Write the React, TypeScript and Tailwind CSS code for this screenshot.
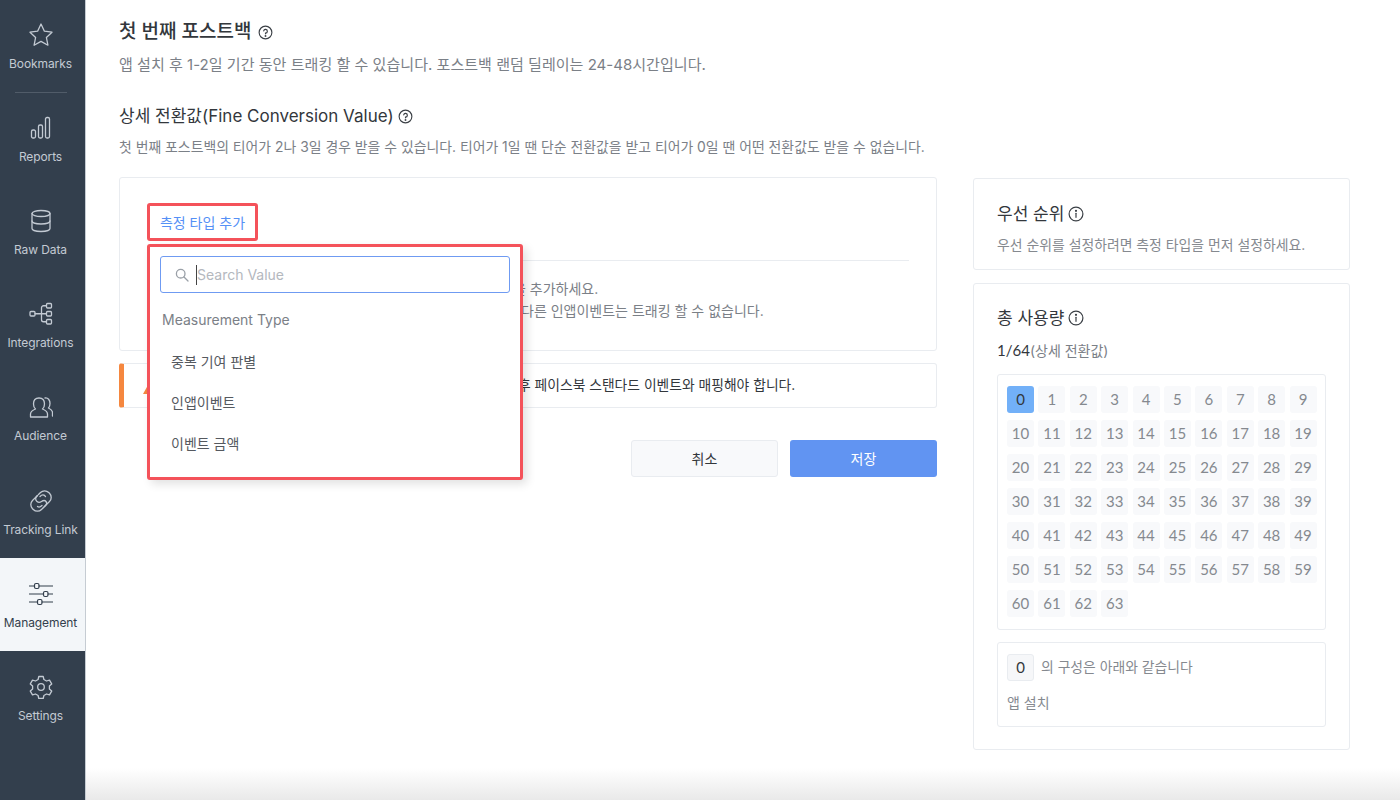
import React from "react";

const FONT = "font-['Inter','Noto_Sans_CJK_KR',sans-serif]";

const s = { fill: "none", stroke: "currentColor", strokeWidth: 1.3, strokeLinecap: "round" as const, strokeLinejoin: "round" as const };

const icons: Record<string, React.ReactNode> = {
  Bookmarks: <path {...s} d="M12 1l3.400 7.200 7.600 1-5.600 5.300 1.500 7.700L12 18.400l-6.900 3.800 1.500-7.700L1 9.200l7.600-1z" />,
  Reports: (
    <g {...s}>
      <rect x="2.500" y="14" width="4" height="8" rx="1.500" />
      <rect x="9.500" y="9" width="4" height="13" rx="1.500" />
      <rect x="16.500" y="1.500" width="4" height="20.500" rx="1.500" />
    </g>
  ),
  "Raw Data": (
    <g {...s}>
      <ellipse cx="12" cy="4.500" rx="9" ry="3" />
      <path d="M3 4.500v15c0 1.700 4 3 9 3s9-1.300 9-3v-15" />
      <path d="M3 12c0 1.700 4 3 9 3s9-1.300 9-3" />
    </g>
  ),
  Integrations: (
    <g {...s}>
      <rect x="1" y="9.500" width="5" height="4.500" rx="1" />
      <rect x="17.500" y="1.500" width="5" height="4.500" rx="1" />
      <rect x="17.500" y="9.500" width="5" height="4.500" rx="1" />
      <rect x="17.500" y="17.500" width="5" height="4.500" rx="1" />
      <path d="M6 11.750h11.500M17.500 3.750h-3a2 2 0 0 0-2 2v12a2 2 0 0 0 2 2h3" />
    </g>
  ),
  Audience: (
    <g {...s}>
      <path d="M1.500 22v-3c0-2.500 2.500-4 5-5-1.500-1.200-2-3-2-5 0-3.500 2-6 5.500-6s5.500 2.500 5.500 6c0 2-.5 3.800-2 5 2.500 1 5 2.500 5 5v3z" />
      <path d="M16 3c3-.5 5 2 5 5.500 0 2-.5 3.500-1.500 4.500 2 1 4 2.500 4 4.500V21" />
    </g>
  ),
  "Tracking Link": (
    <g {...s}>
      <path d="M9.500 5.500l2-2a5.800 5.800 0 0 1 8.200 0l.8.800a5.800 5.800 0 0 1 0 8.200l-5 5" />
      <path d="M14.500 18.500l-2 2a5.800 5.800 0 0 1-8.200 0l-.8-.8a5.800 5.800 0 0 1 0-8.200l5-5" />
      <path d="M8.500 6.500l-.5.500c-1.800 1.800-1.800 4 0 5.500 1.500 1.200 3 1 4.500 0 1.500-1 3.500-1.200 4.500 0s.8 2.800-.5 4l-2 2" />
      <path d="M15.500 6.500l1 1M11 7.500c1.500-1.500 3.200-2 4.500-1M13 16.500c-1.500 1.500-3.200 2-4.500 1" />
    </g>
  ),
  Management: (
    <g {...s} strokeWidth={1.200}>
      <path d="M0.500 4h5M10 4h13.500M0.500 12h14M19 12h4.500M0.500 20h8M13 20h10.500" />
      <rect x="5.500" y="1.500" width="4.500" height="5" rx="1.500" />
      <rect x="14.500" y="9.500" width="4.500" height="5" rx="1.500" />
      <rect x="8.500" y="17.500" width="4.500" height="5" rx="1.500" />
    </g>
  ),
  Settings: (
    <g {...s}>
      <circle cx="12" cy="12" r="3.300" />
      <path d="M9.800 1.500h4.400l.7 3 2.600 1.500 3-.9 2.200 3.800-2.300 2.100v3l2.300 2.100-2.200 3.800-3-.9-2.600 1.500-.7 3H9.800l-.7-3-2.600-1.500-3 .9-2.200-3.800 2.300-2.100v-3L1.300 8.900l2.200-3.800 3 .9 2.600-1.500z" />
    </g>
  ),
};

const nav = ["Bookmarks", "Reports", "Raw Data", "Integrations", "Audience", "Tracking Link", "Management", "Settings"];

function NavItem({ label }: { label: string }) {
  const active = label === "Management";
  const lower = label === "Tracking Link" || active || label === "Settings";
  const base = lower
    ? "relative flex h-[93px] flex-col items-center pr-[4px] pt-[24px]"
    : "relative flex h-[93px] flex-col items-center pr-[4px] pt-[23px]";
  return (
    <div className={active ? `${base} bg-[#f3f6f9] text-[#333f4d]` : `${base} text-[#c3cad3]`}>
      <svg width="24" height="24" viewBox="0 0 24 24">{icons[label]}</svg>
      <div className="mt-[9px] text-[12px] leading-[16px] tracking-[-0.1px] whitespace-nowrap">{label}</div>
      {label === "Bookmarks" && <div className="absolute bottom-0 left-[15px] h-px w-[52px] bg-[#515c69]" />}
    </div>
  );
}

function Help({ size = 15 }: { size?: number }) {
  return (
    <svg width={size} height={size} viewBox="0 0 16 16" fill="none" stroke="#3a3f45" strokeWidth="1.200" strokeLinecap="round">
      <circle cx="8" cy="8" r="6.800" />
      <path d="M6.100 6.300A1.950 1.950 0 1 1 8 8.600v.8" />
      <circle cx="8" cy="11.700" r=".4" fill="#3a3f45" />
    </svg>
  );
}

function Info() {
  return (
    <svg width="16" height="16" viewBox="0 0 16 16" fill="none" stroke="#3a3f45" strokeWidth="1.200" strokeLinecap="round">
      <circle cx="8" cy="8" r="6.900" />
      <path d="M8 7.300v4" />
      <circle cx="8" cy="4.800" r=".5" fill="#3a3f45" />
    </svg>
  );
}

export default function App() {
  return (
    <div className={`relative flex h-[800px] w-[1400px] overflow-hidden bg-white ${FONT}`}>
      <aside className="h-full w-[86px] shrink-0 border-r border-[#c6ccd3] bg-[#333f4d]">
        {nav.map((n) => <NavItem key={n} label={n} />)}
      </aside>

      <main className="min-w-0 flex-1 pl-[33px] pr-[50px] pt-[19px]">
        <div className="flex h-[26px] items-center gap-[6px]">
          <h1 className="text-[19px] font-medium leading-[26px] text-[#33373c]">첫 번째 포스트백</h1>
          <Help />
        </div>
        <p className="mt-[8px] text-[15.050px] leading-[24px] text-[#7b8087]">앱 설치 후 1-2일 기간 동안 트래킹 할 수 있습니다. 포스트백 랜덤 딜레이는 24-48시간입니다.</p>
        <div className="mt-[26px] flex h-[26px] items-center gap-[4px]">
          <h2 className="text-[17px] leading-[26px] text-[#33373c]">상세 전환값(Fine Conversion Value)</h2>
          <Help />
        </div>
        <p className="mt-[7px] text-[13.880px] leading-[22px] text-[#7b8087]">첫 번째 포스트백의 티어가 2나 3일 경우 받을 수 있습니다. 티어가 1일 땐 단순 전환값을 받고 티어가 0일 땐 어떤 전환값도 받을 수 없습니다.</p>

        <div className="mt-[19px] flex gap-[36px]">
          <div className="w-[818px] shrink-0">
            <section className="relative h-[174px] rounded-[3px] border border-[#e9ecf0] pl-[27px] pr-[27px] pt-[25px]">
              <div className="relative w-[111px]">
                <div className="flex h-[38px] items-center justify-center rounded-[3px] border-[3px] border-[#f4525a] text-[14px] text-[#5590f6]">측정 타입 추가</div>
                <div className="absolute left-0 top-[41px] z-10 h-[236px] w-[376px] rounded-[3px] border-[3px] border-[#f4525a] bg-white px-[10px] pt-[9px] shadow-[4px_4px_10px_rgba(0,0,0,0.12)]">
                  <div className="flex h-[37px] items-center rounded-[3px] border border-[#6f9bf2] pl-[14px]">
                    <svg width="14" height="14" viewBox="0 0 14 14" fill="none" stroke="#9aa0a7" strokeWidth="1.300" strokeLinecap="round">
                      <circle cx="5.700" cy="5.700" r="4.300" />
                      <path d="M9 9l4 4" />
                    </svg>
                    <span className="ml-[7px] h-[20px] w-px bg-[#444]" />
                    <span className="text-[14px] text-[#b4b8be]">Search Value</span>
                  </div>
                  <div className="mt-[16px] pl-[2px] text-[14px] leading-[22px] text-[#7b8087]">Measurement Type</div>
                  <ul className="mt-[10px] pl-[11px] text-[14px] text-[#55595f]">
                    <li className="flex h-[41px] items-center">중복 기여 판별</li>
                    <li className="flex h-[41px] items-center">인앱이벤트</li>
                    <li className="flex h-[41px] items-center">이벤트 금액</li>
                  </ul>
                </div>
              </div>
              <div className="mt-[19px] h-px bg-[#e9ecf0]" />
              <div className="mt-[17px] whitespace-nowrap text-[14px] leading-[22px] text-[#7b8087]">
                <p className="pl-[366px]">을 추가하세요.</p>
                <p className="pl-[374px]">다른 인앱이벤트는 트래킹 할 수 없습니다.</p>
              </div>
            </section>

            <div className="mt-[12px] flex h-[45px] items-center rounded-[3px] border border-l-[5px] border-[#e9ecf0] border-l-[#f5873f] pl-[18px] text-[13.800px] text-[#33373c]">
              <svg width="20" height="18" viewBox="0 0 20 18" className="shrink-0"><path d="M10 1l9 16H1z" fill="#f5873f" /></svg>
              <span className="ml-[356px] whitespace-nowrap">후 페이스북 스탠다드 이벤트와 매핑해야 합니다.</span>
            </div>

            <div className="mt-[32px] flex justify-end gap-[12px]">
              <button className="h-[37px] w-[147px] rounded-[3px] border border-[#e9ecf0] bg-[#f8f9fb] text-[14px] text-[#33373c]">취소</button>
              <button className="h-[37px] w-[147px] rounded-[3px] bg-[#6194f2] text-[14px] text-white">저장</button>
            </div>
          </div>

          <div className="w-[377px] shrink-0">
            <section className="mt-[1px] h-[92px] rounded-[3px] border border-[#e9ecf0] pl-[23px] pt-[23px]">
              <div className="flex h-[24px] items-center gap-[4px]">
                <h3 className="text-[17px] leading-[24px] text-[#33373c]">우선 순위</h3>
                <Info />
              </div>
              <p className="mt-[9px] text-[13.880px] leading-[20px] text-[#85898f]">우선 순위를 설정하려면 측정 타입을 먼저 설정하세요.</p>
            </section>

            <section className="mt-[13px] h-[467px] rounded-[3px] border border-[#e9ecf0] px-[23px] pt-[22px]">
              <div className="flex h-[24px] items-center gap-[4px]">
                <h3 className="text-[17px] leading-[24px] text-[#33373c]">총 사용량</h3>
                <Info />
              </div>
              <p className="mt-[10px] text-[14px] leading-[20px] text-[#7b8087]">
                <span className="font-['Lato','Noto_Sans_CJK_KR',sans-serif] text-[15px] text-[#33373c]">1/64</span>(상세 전환값)
              </p>
              <div className="mt-[13px] grid h-[256px] w-[329px] grid-cols-[repeat(10,27px)] content-start gap-x-[4.400px] gap-y-[7px] rounded-[3px] border border-[#e9ecf0] pl-[9px] pt-[11px]">
                {Array.from({ length: 64 }, (_, i) => (
                  <div key={i} className={i === 0
                    ? "flex h-[27px] items-center justify-center rounded-[3px] bg-[#72b0f8] font-['Lato',sans-serif] text-[15px] text-[#33373c]"
                    : "flex h-[27px] items-center justify-center rounded-[3px] bg-[#f8f9fb] font-['Lato',sans-serif] text-[15px] text-[#85898f]"}>{i}</div>
                ))}
              </div>
              <div className="mt-[12px] h-[85px] w-[329px] rounded-[3px] border border-[#e9ecf0] pl-[9px] pt-[11px]">
                <div className="flex items-center gap-[7px]">
                  <span className="flex h-[27px] w-[27px] items-center justify-center rounded-[3px] border border-[#e9ecf0] bg-[#f6f7f9] font-['Lato',sans-serif] text-[15px] text-[#33373c]">0</span>
                  <span className="text-[13.850px] text-[#85898f]">의 구성은 아래와 같습니다</span>
                </div>
                <p className="mt-[12px] text-[14px] leading-[20px] text-[#85898f]">앱 설치</p>
              </div>
            </section>
          </div>
        </div>
      </main>

      <div className="pointer-events-none absolute bottom-0 left-[86px] right-0 h-[32px] bg-gradient-to-b from-transparent to-[#e9e9e9]" />
    </div>
  );
}
